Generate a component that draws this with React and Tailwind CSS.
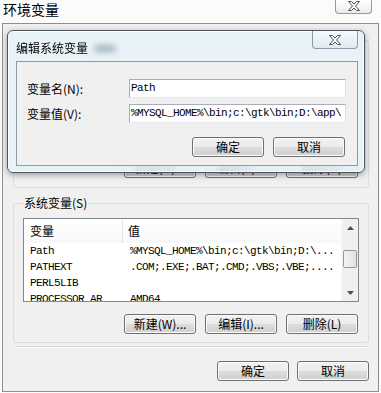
const cjk = "font-['SimSun','Noto_Sans_CJK_SC',sans-serif]";
const mono = "font-['Liberation_Mono','Noto_Sans_CJK_SC',monospace] text-[11px] tracking-[-0.6px]";

const CloseGlyph = () => (
  <svg width="12" height="10" viewBox="0 0 12 10">
    <polygon
      points="0.5,0.5 3.5,0.5 6,3 8.5,0.5 11.5,0.5 7.5,5 11.5,9.5 8.5,9.5 6,7 3.5,9.5 0.5,9.5 4.5,5"
      fill="#fff"
      stroke="#505050"
      strokeWidth="1"
      strokeLinejoin="round"
    />
  </svg>
);

const Btn = ({ children, className = "" }) => (
  <button
    className={`h-[20px] w-[72px] rounded-[3px] border border-[#707070] bg-[linear-gradient(to_bottom,#f2f2f2_0%,#ebebeb_50%,#dddddd_51%,#cfcfcf_100%)] shadow-[inset_0_0_0_1px_#fbfbfb] text-[12px] leading-[16px] text-black ${cjk} ${className}`}
  >
    {children}
  </button>
);

const ButtonRow = ({ labels }) => (
  <div className="flex justify-end gap-[9px] pr-[1px]">
    {labels.map((l) => (
      <Btn key={l}>{l}</Btn>
    ))}
  </div>
);

const rows = [
  ["Path", "%MYSQL_HOME%\\bin;c:\\gtk\\bin;D:\\..."],
  ["PATHEXT", ".COM;.EXE;.BAT;.CMD;.VBS;.VBE;...."],
  ["PERL5LIB", ""],
  ["PROCESSOR_AR", "AMD64"],
];

const Arrow = ({ up }) => (
  <svg width="7" height="4" viewBox="0 0 7 4">
    <polygon points={up ? "0,4 3.5,0 7,4" : "0,0 3.5,4 7,0"} fill="#505050" />
  </svg>
);

const ListBox = () => (
  <div className="flex h-[84px] border border-[#828790] bg-white overflow-hidden">
    <div className="flex-1 flex flex-col overflow-hidden">
      <div className={`shrink-0 flex h-[24px] items-center text-[12px] ${cjk} bg-[linear-gradient(to_bottom,#ffffff,#f7f8f9)]`}>
        <div className="w-[99px] h-full flex items-center pl-[6px] border-r border-[#e3e5e7]">变量</div>
        <div className="flex-1 pl-[5px]">值</div>
      </div>
      {rows.map(([k, v]) => (
        <div key={k} className={`shrink-0 flex h-[16px] items-center ${mono} text-black whitespace-nowrap`}>
          <div className="w-[100px] pl-[6px] overflow-hidden">{k}</div>
          <div className="flex-1 pl-[6px] overflow-hidden">{v}</div>
        </div>
      ))}
    </div>
    <div className="w-[17px] flex flex-col bg-[#f0f0f0] border-l border-[#f7f7f7]">
      <div className="h-[17px] flex items-center justify-center">
        <Arrow up />
      </div>
      <div className="h-[14px]" />
      <div className="mx-[1px] h-[18px] rounded-[2px] border border-[#979797] bg-[linear-gradient(to_right,#f3f3f3,#e2e2e2)]" />
      <div className="flex-1" />
      <div className="h-[17px] flex items-center justify-center">
        <Arrow />
      </div>
    </div>
  </div>
);

const Field = ({ label, value }) => (
  <div className="flex items-center">
    <div className={`w-[102px] text-[12px] leading-[16px] ${cjk}`}>{label}</div>
    <div
      className={`w-[217px] h-[19px] border border-[#abadb3] border-b-[#e3e9ef] border-r-[#dbdfe6] bg-white pl-[1px] flex items-center overflow-hidden whitespace-nowrap ${mono}`}
    >
      {value}
    </div>
  </div>
);

export default function App() {
  return (
    <div className={`relative w-[381px] h-[393px] bg-[#fbfbfb] overflow-hidden text-black ${cjk}`}>
      {/* outer title bar */}
      <div className="flex h-[23px] items-start justify-between">
        <div className="pl-[3px] pt-[1px] text-[14px] leading-[17px] font-['Noto_Sans_CJK_SC',sans-serif]">环境变量</div>
        <div className="mr-[9px] w-[37px] h-[14px] rounded-b-[4px] border border-t-0 border-[#9a9a9a] bg-[linear-gradient(to_bottom,#ffffff,#ececec)] flex items-center justify-center pb-[1px]">
          <CloseGlyph />
        </div>
      </div>

      {/* outer content */}
      <div className="mx-[2px] h-[369px] border border-[#8e8f8f] bg-[#f0f0f0] pl-[10px] pr-[9px]">
        <fieldset className="mt-[9px] h-[155px] border border-[#d5dfe5] rounded-[3px] px-[9px] pb-[8px]">
          <legend className="px-[1px] h-[14px] w-[90px]" />
          <div className="mt-[111px]">
            <ButtonRow labels={["新建(N)...", "编辑(E)...", "删除(D)"]} />
          </div>
        </fieldset>

        <fieldset className="mt-[8px] border border-[#d5dfe5] rounded-[3px] px-[9px] pb-[8px]">
          <legend className="px-[1px] text-[12px] leading-[14px]">系统变量(S)</legend>
          <div className="mt-[8px]">
            <ListBox />
          </div>
          <div className="mt-[12px]">
            <ButtonRow labels={["新建(W)...", "编辑(I)...", "删除(L)"]} />
          </div>
        </fieldset>

        <div className="mt-[3px] mx-[2px] border-t border-[#d7d7d7] border-b border-b-white" />

        <div className="mt-[13px] flex justify-end gap-[8px]">
          <Btn>确定</Btn>
          <Btn>取消</Btn>
        </div>
      </div>

      {/* edit dialog over the window */}
      <div className="absolute left-[7px] top-[30px] w-[358px] h-[143px] rounded-[6px] border border-[#4b5560] bg-[#e6f3f9]/85 backdrop-blur-[3px] shadow-[0_2px_6px_rgba(0,0,0,0.35),inset_0_0_0_1px_rgba(255,255,255,0.8)] flex flex-col">
        <div className="flex h-[30px] items-start justify-between">
          <div className="flex items-center pl-[8px] pt-[10px]">
            <span className="text-[12px] leading-[14px]">编辑系统变量</span>
            <span className="ml-[6px] w-[22px] h-[7px] rounded-full bg-[#8a94a8] blur-[3px] opacity-70" />
          </div>
          <div className="mr-[6px] w-[46px] h-[18px] rounded-b-[4px] border border-t-0 border-[#8f9aa5] bg-[linear-gradient(to_bottom,#f4fbfe,#dcebf3)] flex items-center justify-center">
            <CloseGlyph />
          </div>
        </div>
        <div className="ml-[8px] mr-[6px] h-[105px] border border-[#8e9aa6] bg-[#f0f0f0] pt-[17px] pl-[10px]">
          <Field label="变量名(N):" value="Path" />
          <div className="mt-[6px]">
            <Field label="变量值(V):" value={"%MYSQL_HOME%\\bin;c:\\gtk\\bin;D:\\app\\"} />
          </div>
          <div className="mt-[14px] flex justify-end gap-[9px] pr-[12px]">
            <Btn className="h-[19px]">确定</Btn>
            <Btn className="h-[19px]">取消</Btn>
          </div>
        </div>
      </div>
    </div>
  );
}
